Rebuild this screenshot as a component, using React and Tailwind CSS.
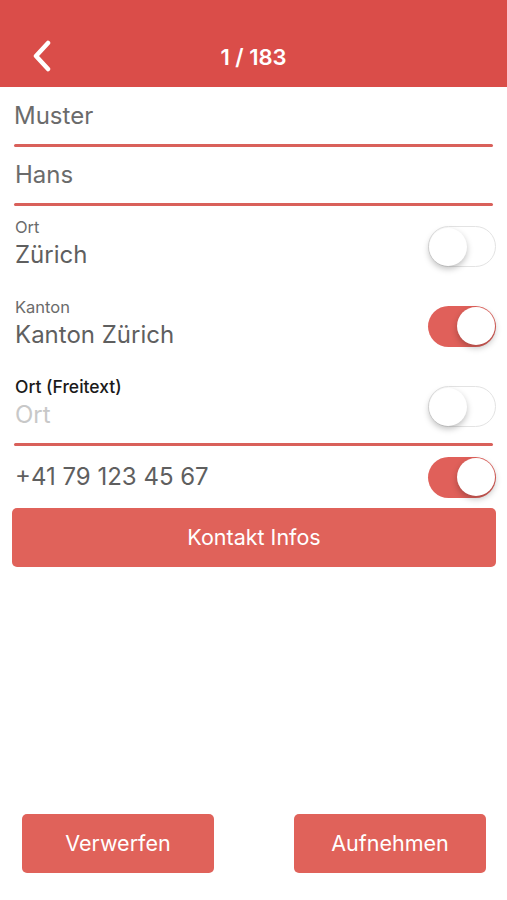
import React from "react";

const Toggle = ({ on }) => (
  <div
    className={`relative w-[68px] h-[41px] rounded-full shrink-0 mt-[20px] ${
      on ? "bg-[#e0605a]" : "bg-white border border-[#e3e3e3]"
    }`}
  >
    <div
      className={`absolute top-[1px] w-[38px] h-[38px] rounded-full bg-white shadow-[0_3px_6px_rgba(0,0,0,0.25)] ${
        on ? "right-[1px]" : "left-0"
      }`}
    />
  </div>
);

const Line = () => <div className="mx-[14px] h-[3px] bg-[#d9605a] rounded-full" />;

const Row = ({ label, value, on, dark, placeholder, h }) => (
  <div className={`flex items-start justify-between pl-[15px] pr-[11px] ${h}`}>
    <div className="pt-[11px]">
      <div
        className={`leading-[20px] ${
          dark ? "text-[17.5px] font-medium text-[#1a1a1a]" : "text-[16.5px] text-[#6b6b6b]"
        }`}
      >
        {label}
      </div>
      <div
        className={`mt-[4px] leading-[28px] text-[24px] ${
          placeholder ? "text-[#c8c8c8]" : "text-[#5f5f5f]"
        }`}
      >
        {value}
      </div>
    </div>
    <Toggle on={on} />
  </div>
);

const App = () => {
  return (
    <div className="h-screen flex flex-col bg-white font-['Inter',sans-serif]">
      <div className="h-[87px] bg-[#da4d49] flex items-end">
        <div className="relative h-[60px] w-full flex items-center justify-center">
          <svg className="absolute left-[30px] top-[13px]" width="24" height="32" viewBox="0 0 24 32">
            <path d="M18 3 L6 16 L18 29" fill="none" stroke="white" strokeWidth="4.5" strokeLinecap="round" strokeLinejoin="round" />
          </svg>
          <span className="text-white text-[22px] font-semibold">1 / 183</span>
        </div>
      </div>

      <div className="h-[57px] flex items-center px-[14px] text-[24px] text-[#6b6b6b]">Muster</div>
      <Line />
      <div className="h-[56px] flex items-center px-[15px] text-[24px] text-[#6b6b6b]">Hans</div>
      <Line />

      <Row label="Ort" value="Zürich" h="h-[80px]" />
      <Row label="Kanton" value="Kanton Zürich" on h="h-[80px]" />
      <Row label="Ort (Freitext)" value="Ort" dark placeholder h="h-[77px]" />
      <Line />

      <div className="h-[62px] flex items-center justify-between pl-[15px] pr-[11px]">
        <span className="text-[24px] text-[#5f5f5f]">+41 79 123 45 67</span>
        <div className="-mt-[20px]">
          <Toggle on />
        </div>
      </div>

      <button className="mx-[12px] mr-[11px] h-[59px] rounded-[5px] bg-[#e0625a] text-white text-[21.5px]">
        Kontakt Infos
      </button>

      <div className="flex-1" />

      <div className="flex justify-between pl-[22px] pr-[21px] pb-[27px]">
        <button className="w-[192px] h-[59px] rounded-[5px] bg-[#e0625a] text-white text-[21.5px]">
          Verwerfen
        </button>
        <button className="w-[192px] h-[59px] rounded-[5px] bg-[#e0625a] text-white text-[21.5px]">
          Aufnehmen
        </button>
      </div>
    </div>
  );
};

export default App;
